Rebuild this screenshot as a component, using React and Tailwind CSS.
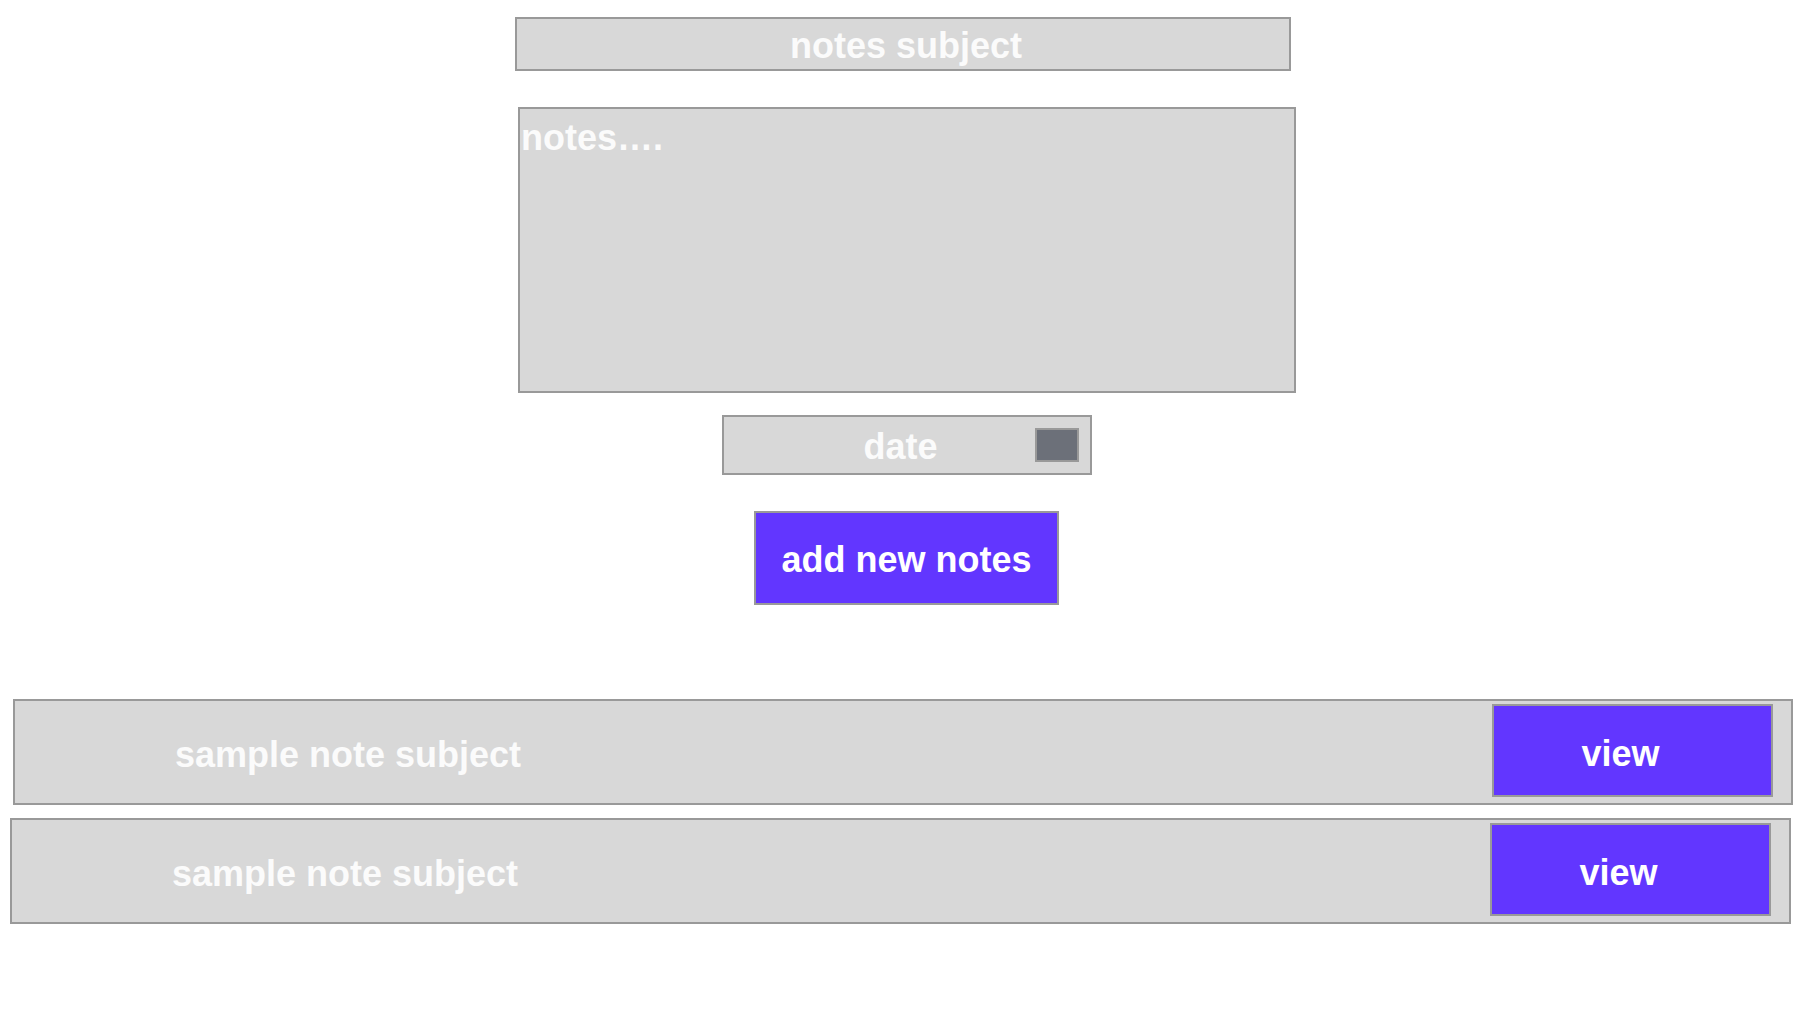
import React from "react";

const font = { fontFamily: '"Liberation Sans", Arial, sans-serif' };

const notes = [
  { id: 1, subject: "sample note subject", shift: "ml-[13px] w-[1780px]" },
  { id: 2, subject: "sample note subject", shift: "ml-[10px] w-[1781px]" },
];

function NoteRow({ subject, shift }) {
  return (
    <div
      className={`${shift} h-[106px] flex items-start border-2 border-[#999999] bg-[#d8d8d8]`}
    >
      <div className="flex-1 h-full flex items-center pl-[160px] pt-[5px] text-[36px] font-bold text-[#fbfbfb] leading-none">
        {subject}
      </div>
      <button className="mt-[3px] mr-[18px] w-[281px] h-[93px] border-2 border-[#999999] bg-[#6236ff] text-white text-[36px] font-bold pr-[24px] pt-[6px]">
        view
      </button>
    </div>
  );
}

export default function App() {
  return (
    <div className="min-h-[1020px] w-[1806px] bg-white" style={font}>
      <div className="flex flex-col items-start">
        <div className="mt-[17px] ml-[515px] w-[776px] h-[54px] border-2 border-[#999999] bg-[#d8d8d8] flex items-center justify-center text-[36px] font-bold text-[#fbfbfb] pl-[6px] pt-[4px]">
          notes subject
        </div>

        <div className="mt-[36px] ml-[518px] w-[778px] h-[286px] border-2 border-[#999999] bg-[#d8d8d8] text-[36px] font-bold text-[#fbfbfb] pt-[8px] pl-[1px] leading-[1.15]">
          notes….
        </div>

        <div className="relative mt-[22px] ml-[722px] w-[370px] h-[60px] border-2 border-[#999999] bg-[#d8d8d8] flex items-center justify-center pr-[13px] pt-[4px] text-[36px] font-bold text-[#fbfbfb]">
          date
          <span className="absolute right-[11px] top-[11px] w-[44px] h-[34px] border-2 border-[#999999] bg-[#6c7079]"></span>
        </div>

        <button className="mt-[36px] ml-[754px] w-[305px] h-[94px] border-2 border-[#999999] bg-[#6236ff] text-white text-[36px] font-bold pt-[4px]">
          add new notes
        </button>

        <div className="mt-[94px] flex flex-col gap-[13px]">
          {notes.map((n) => (
            <NoteRow key={n.id} subject={n.subject} shift={n.shift} />
          ))}
        </div>
      </div>
    </div>
  );
}
